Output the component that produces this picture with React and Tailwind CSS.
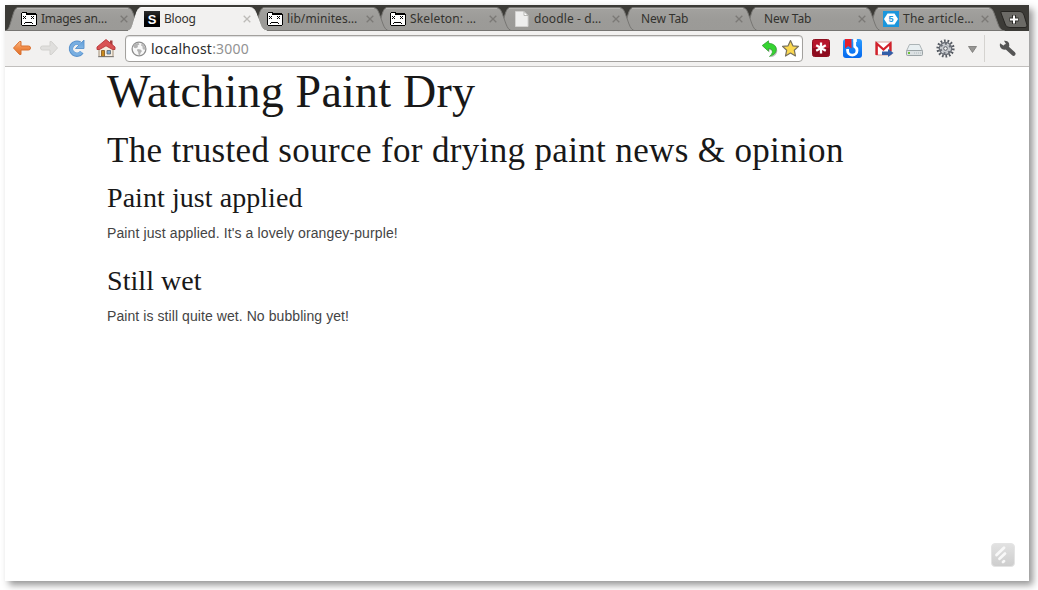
import React from "react";

const UI_FONT = "font-['Noto_Sans',sans-serif]";

function TabShape({ active }) {
  const edge = "M0 24 C3 23 4 21 5.500 16 L8.500 6 C10 2 11 0.500 14 0.500 H121 C125 0.500 126.500 2 128 6 L132 17 C133.500 21 135 23.500 139 24";
  return (
    <svg className="absolute inset-0" width="139" height="24" viewBox="0 0 139 24">
      <defs>
        <linearGradient id="tabFill" x1="0" y1="0" x2="0" y2="1">
          <stop offset="0" stopColor="#a3a29f" />
          <stop offset="0.5" stopColor="#9c9b98" />
          <stop offset="1" stopColor="#9b9a97" />
        </linearGradient>
      </defs>
      <path d={edge + " Z"} fill={active ? "#f2f1f0" : "url(#tabFill)"} />
      {active ? (
        <path d={edge} fill="none" stroke="#f8f8f7" strokeWidth="1" />
      ) : (
        <>
          <path d={edge} fill="none" stroke="#777673" strokeWidth="1" />
          <path d="M12 1.500 H123" stroke="#b7b6b3" strokeWidth="1" />
          <path d="M2 23.500 H138" stroke="#767572" strokeWidth="1" />
        </>
      )}
    </svg>
  );
}

function FaceIcon() {
  return (
    <svg width="16" height="16" viewBox="0 0 16 16" shapeRendering="crispEdges">
      <path d="M1 1H6V2H15V3H16V14H15V15H1V14H0V2H1Z" fill="#000" />
      <path d="M1 2H5V4H15V14H1Z" fill="#fff" />
      <path d="M2 5h1v1H2zM4 5h1v1H4zM3 6h1v1H3zM2 7h1v1H2zM4 7h1v1H4zM10 5h1v1h-1zM12 5h1v1h-1zM11 6h1v1h-1zM10 7h1v1h-1zM12 7h1v1h-1zM4 11h7v1H4zM3 12h1v1H3zM11 12h1v1h-1z" fill="#000" />
    </svg>
  );
}

function SIcon() {
  return (
    <div className="flex h-4 w-4 items-center justify-center bg-black bg-linear-to-b from-[#2c2c2c] to-black font-['Liberation_Sans',sans-serif] text-[13px] leading-none font-bold text-white">
      S
    </div>
  );
}

function PageIcon() {
  return (
    <svg width="16" height="16" viewBox="0 0 16 16">
      <path d="M1.500 0.500H10L14 4.500V15.500H1.500Z" fill="#eeeeed" stroke="#d2d1cf" />
      <path d="M10 0.500V4.500H14Z" fill="#fff" stroke="#aaa9a6" strokeWidth="0.8" />
    </svg>
  );
}

function HexIcon() {
  return (
    <div className="relative flex h-4 w-4 items-center justify-center bg-[#1b96dc]">
      <svg className="absolute inset-0" width="16" height="16" viewBox="0 0 16 16">
        <path d="M4.500 2.500H11.500L15 8L11.500 13.500H4.500L1 8Z" fill="#fff" />
      </svg>
      <span className="relative font-['Liberation_Sans',sans-serif] text-[9px] leading-none font-bold text-[#1b96dc]">5</span>
    </div>
  );
}

const TABS = [
  { icon: <FaceIcon />, title: "Images an…", spacing: "tracking-[-0.28px]", pad: "pl-[16px]", layer: "z-[8]" },
  { icon: <SIcon />, title: "Bloog", spacing: "tracking-[-0.2px]", pad: "pl-[16px]", layer: "z-[9]", active: true },
  { icon: <FaceIcon />, title: "lib/minites…", spacing: "tracking-[0.1px]", pad: "pl-[16px]", layer: "z-[7]" },
  { icon: <FaceIcon />, title: "Skeleton: …", spacing: "tracking-[0.15px]", pad: "pl-[16px]", layer: "z-[6]" },
  { icon: <PageIcon />, title: "doodle - d…", spacing: "tracking-[0.1px]", pad: "pl-[17px]", layer: "z-[5]" },
  { title: "New Tab", spacing: "tracking-[-0.1px]", pad: "pl-[21px]", layer: "z-[4]" },
  { title: "New Tab", spacing: "tracking-[-0.1px]", pad: "pl-[21px]", layer: "z-[3]" },
  { icon: <HexIcon />, title: "The article…", spacing: "tracking-[0.22px]", pad: "pl-[17px]", layer: "z-[2]" },
];

function Tab({ icon, title, spacing, pad, layer, active }) {
  return (
    <div className={`relative -mr-4 h-6 w-[139px] shrink-0 ${layer}`}>
      <TabShape active={active} />
      <div className={`relative flex h-6 items-center ${pad}`}>
        {icon && <div className="mr-1 shrink-0">{icon}</div>}
        <span className={`${UI_FONT} ${spacing} text-[12px] leading-4 whitespace-nowrap text-[#33322e]`}>{title}</span>
        <svg className="mr-[16px] ml-auto shrink-0" width="8" height="8" viewBox="0 0 8 8">
          <path d="M0.700 0.700L7.300 7.300M7.300 0.700L0.700 7.300" stroke={active ? "#bdbbb8" : "#7b7976"} strokeWidth="1.300" />
        </svg>
      </div>
    </div>
  );
}

function Toolbar() {
  return (
    <div className="flex h-9 items-center border-b border-[#c1bfbd] bg-[#f2f1f0] pl-[7px]">
      <svg className="shrink-0" width="20" height="21" viewBox="12 38 20 21">
        <defs>
          <linearGradient id="orange" x1="0" y1="0" x2="0" y2="1">
            <stop offset="0" stopColor="#f9b98a" />
            <stop offset="0.5" stopColor="#f08a45" />
            <stop offset="1" stopColor="#e0722e" />
          </linearGradient>
          <linearGradient id="blue" x1="0" y1="0" x2="0" y2="1">
            <stop offset="0" stopColor="#5b9bd8" />
            <stop offset="1" stopColor="#82b5e4" />
          </linearGradient>
        </defs>
        <path d="M13.500 48L19.500 41.500H21V46H28.500Q30.500 46 30.500 48T28.500 50H21V54.500H19.500Z" fill="url(#orange)" stroke="#d9702f" strokeLinejoin="round" />
      </svg>
      <svg className="ml-[7px] shrink-0" width="20" height="21" viewBox="39 38 20 21">
        <path d="M57.500 48L51.500 41.500H50V46H42.500Q40.500 46 40.500 48T42.500 50H50V54.500H51.500Z" fill="#e0dfdd" stroke="#d2d1ce" strokeLinejoin="round" />
      </svg>
      <svg className="ml-2 shrink-0" width="20" height="21" viewBox="67 38 20 21">
        <path d="M81.800 52.200A6 6 0 1 1 80 43.500" fill="none" stroke="#5a92cc" strokeWidth="4.400" />
        <path d="M84 40V48.500H75.500Z" fill="url(#blue)" stroke="#5a92cc" strokeWidth="0.900" strokeLinejoin="round" />
        <path d="M81.500 52A5.700 5.700 0 1 1 80.200 44" fill="none" stroke="#78aee1" strokeWidth="3" />
      </svg>
      <svg className="ml-2 shrink-0" width="22" height="21" viewBox="95 38 22 21">
        <path d="M99 48L106 43L113 48V56.500H99Z" fill="#f5ede0" stroke="#a28e77" />
        <path d="M110 40.500H112.500V45H110Z" fill="#a43c3c" />
        <path d="M106 39.500L97 47V49.500H99.500L106 45.800L112.500 49.500H115V47Z" fill="#d95353" stroke="#b83438" strokeWidth="0.900" strokeLinejoin="round" />
        <path d="M101.500 50.500H104.500V56.500H101.500Z" fill="#c98a1e" stroke="#7d5621" strokeWidth="0.800" />
        <path d="M107 50.500H110.500V54H107Z" fill="#7ea9d3" stroke="#5b6875" strokeWidth="0.800" />
        <path d="M98 56.700H114" stroke="#777" strokeWidth="0.900" />
      </svg>

      <div className="ml-2 flex h-[27px] w-[678px] shrink-0 items-center rounded-[4px] border border-[#a3a19e] bg-white pl-[5px] shadow-[inset_0_1px_1px_#dddddd]">
        <svg width="16" height="16" viewBox="0 0 16 16">
          <circle cx="8" cy="8" r="6.900" fill="#f8f8f8" stroke="#8f8f8f" strokeWidth="1.300" />
          <path d="M2.200 5.500Q4 2 7.500 2L8.500 3.500L6.500 4.500L7 6L5 7.300L3.500 7Z" fill="#b3b3b3" />
          <path d="M6.500 8L9.500 8.500L11 10L9.500 12L9 14.300L7.500 13.500L7.200 11L6 9.500Z" fill="#b3b3b3" />
          <path d="M10.500 2.500Q14.300 4.500 14.300 8L13 9L11.500 7.500L11.500 5.500L10 4.500Z" fill="#b9b9b9" />
        </svg>
        <span className={`ml-1 ${UI_FONT} text-[14px] leading-5 tracking-[0.220px] whitespace-nowrap text-[#2b2b2b]`}>
          localhost<span className="text-[#929292]">:3000</span>
        </span>
        <svg className="ml-auto" width="18" height="21" viewBox="761 38 18 21">
          <path d="M763 46.500L769.500 42V44.500Q777.500 45 777.300 51Q777 56 770.500 57.300Q775.500 53 772 50.500L769.500 50V52.500Z" fill="#555" opacity="0.4" />
          <path d="M762.200 45.500L768.500 40.800V43.300Q776.500 43.800 776.300 49.800Q776 54.500 769.500 56.500Q774 52.300 771.500 49.500Q770.500 48.500 768.500 48.500V51.200Z" fill="#35d431" stroke="#2c9c2c" strokeWidth="0.700" strokeLinejoin="round" />
        </svg>
        <svg className="ml-[3px] mr-[2px]" width="18" height="21" viewBox="782 38 18 21">
          <path d="M790.500 40.500L792.900 45.800L798.500 46.400L794.300 50.200L795.500 56L790.500 53.100L785.500 56L786.700 50.200L782.500 46.400L788.100 45.800Z" fill="#fbd850" stroke="#77705c" strokeWidth="1.200" strokeLinejoin="round" />
        </svg>
      </div>

      <svg className="ml-2 shrink-0" width="20" height="21" viewBox="811 38 20 21">
        <rect x="812.500" y="39.500" width="17" height="17" rx="2" fill="#b7152b" stroke="#8d1020" />
        <path d="M813 48H829V55Q829 56 828 56H814Q813 56 813 55Z" fill="#8e0c1f" />
        <path d="M821 42.500V53.500M816.200 45.200L825.800 50.800M825.800 45.200L816.200 50.800" stroke="#fff" strokeWidth="2.300" />
      </svg>
      <svg className="ml-[11px] shrink-0" width="21" height="21" viewBox="842 38 21 21">
        <defs>
          <linearGradient id="ribbonTile" x1="0" y1="0" x2="0" y2="1">
            <stop offset="0" stopColor="#2a9bff" />
            <stop offset="1" stopColor="#0468ee" />
          </linearGradient>
        </defs>
        <rect x="843" y="39" width="19" height="19" rx="3" fill="url(#ribbonTile)" />
        <path d="M853.200 40.500H856.800M854.700 40.500V46.500Q857 48 857 50.500A4.700 4.700 0 0 1 847.600 50.500V49" fill="none" stroke="#fff" strokeWidth="2.800" />
        <path d="M845 39H851.500V48.500L848.200 46L845 48.500Z" fill="#e4202d" />
      </svg>
      <svg className="ml-[11px] shrink-0" width="20" height="21" viewBox="874 38 20 21">
        <rect x="875.500" y="42" width="16" height="13" rx="1" fill="#fff" stroke="#d7a29e" />
        <path d="M876.700 55V43.500L883.500 49.500L890.300 43.500V51" fill="none" stroke="#d3212c" strokeWidth="2.300" />
        <path d="M882 51.500H888V49L893.500 53L888 57V55H882Z" fill="#345ea8" />
      </svg>
      <svg className="ml-[11px] shrink-0" width="20" height="21" viewBox="905 38 20 21">
        <path d="M909.500 44.500H919.500L922.500 51H906.500Z" fill="#e8eff1" stroke="#a5adaf" strokeWidth="0.900" />
        <rect x="906.500" y="50.500" width="16" height="5" rx="1" fill="#dbe0e2" stroke="#929b9e" strokeWidth="0.900" />
        <path d="M914 53H921" stroke="#b4bcbf" strokeWidth="1.200" strokeDasharray="1 1" />
        <path d="M908 53H910" stroke="#6cc036" strokeWidth="1.800" />
      </svg>
      <svg className="ml-[10px] shrink-0" width="21" height="21" viewBox="935 38 21 21">
        <circle cx="945.500" cy="48.500" r="7.800" fill="none" stroke="#555a62" strokeWidth="2.600" strokeDasharray="1.700 1.800" />
        <circle cx="945.500" cy="48.500" r="5.300" fill="#c5c8cd" stroke="#6b6f77" strokeWidth="3" />
        <circle cx="945.500" cy="48.500" r="4.600" fill="none" stroke="#d3d6da" strokeWidth="1.600" strokeDasharray="2.500 2" />
        <circle cx="945.500" cy="48.500" r="1.800" fill="#f5f5f5" stroke="#5b5f67" />
      </svg>
      <svg className="ml-[11px] shrink-0" width="11" height="21" viewBox="967 38 11 21">
        <path d="M968.500 46.500H976.500L972.500 52.500Z" fill="#979694" stroke="#777674" strokeWidth="0.800" />
      </svg>
      <div className="ml-[6px] h-[27px] w-px shrink-0 bg-[#d5d3d0]" />
      <svg className="ml-3 shrink-0" width="21" height="21" viewBox="997 38 21 21">
        <path d="M1005.500 46.500L1013.500 53.800" stroke="#555" strokeWidth="4.200" strokeLinecap="round" />
        <path d="M1000 43.300L1003.800 45.800L1006 44L1004 40.700Q1007.500 40.300 1009 43Q1010 45.500 1008 48Q1005.500 50.500 1002.500 49.300Q999 47.500 1000 43.300Z" fill="#555" />
      </svg>
    </div>
  );
}

function Post({ title, body, spacing }) {
  return (
    <article className="mb-5">
      <h3 className="mb-2 font-['Liberation_Serif',serif] text-[28px] leading-[34px] tracking-[0.06px] text-[#181818]">{title}</h3>
      <p className={`font-['Liberation_Sans',sans-serif] text-[14px] leading-[21px] text-[#444] ${spacing}`}>{body}</p>
    </article>
  );
}

export default function App() {
  return (
    <div className="h-[590px] w-[1038px] overflow-hidden bg-white pt-[5px] pl-[5px]">
      <div className="flex h-[576px] w-[1024px] flex-col bg-white shadow-[4px_4px_7px_rgba(0,0,0,0.42)]">
        <div className="isolate flex h-[26px] shrink-0 overflow-hidden bg-[#3c3b37] pt-[2px]">
          {TABS.map((tab, i) => (
            <Tab key={i} {...tab} />
          ))}
          <svg className="ml-[9px] shrink-0" width="32" height="24" viewBox="998 7 32 24">
            <path d="M1001 11.500Q1001.500 11.500 1003 11.500H1020Q1023 11.500 1024 15L1027 25Q1027.500 27.500 1025 27.500H1010Q1006.500 27.500 1005.500 25L1001 13Z" fill="#6b6a66" stroke="#262522" />
            <path d="M1014 15V24M1009.500 19.500H1018.500" stroke="#2d2c29" strokeWidth="4" />
            <path d="M1014 15.500V23.500M1010 19.500H1018" stroke="#fff" strokeWidth="2" />
          </svg>
        </div>
        <Toolbar />
        <main className="flex flex-1 flex-col pl-[102px]">
          <h1 className="mb-[14px] font-['Liberation_Serif',serif] text-[46px] leading-[50px] tracking-[0.22px] text-[#181818]">Watching Paint Dry</h1>
          <h2 className="mb-[10px] font-['Liberation_Serif',serif] text-[35px] leading-[40px] tracking-[0.35px] text-[#181818]">
            The trusted source for drying paint news &amp; opinion
          </h2>
          <Post title="Paint just applied" body="Paint just applied. It's a lovely orangey-purple!" spacing="tracking-[0.115px]" />
          <Post title="Still wet" body="Paint is still quite wet. No bubbling yet!" spacing="tracking-[0.075px]" />
          <svg className="mt-auto mr-[14px] mb-[14px] self-end" width="24" height="24" viewBox="0 0 24 24">
            <defs>
              <linearGradient id="badge" x1="0" y1="0" x2="0" y2="1">
                <stop offset="0" stopColor="#e2e2e2" />
                <stop offset="1" stopColor="#cdcdcd" />
              </linearGradient>
            </defs>
            <rect x="0.500" y="0.500" width="23" height="23" rx="3.500" fill="url(#badge)" stroke="#e4e4e4" />
            <path d="M5.500 12L13 4.800M8.500 15.800L14 10.600M12 19L13 18.200" stroke="#f8f8f8" strokeWidth="2.800" strokeLinecap="round" />
          </svg>
        </main>
      </div>
    </div>
  );
}
